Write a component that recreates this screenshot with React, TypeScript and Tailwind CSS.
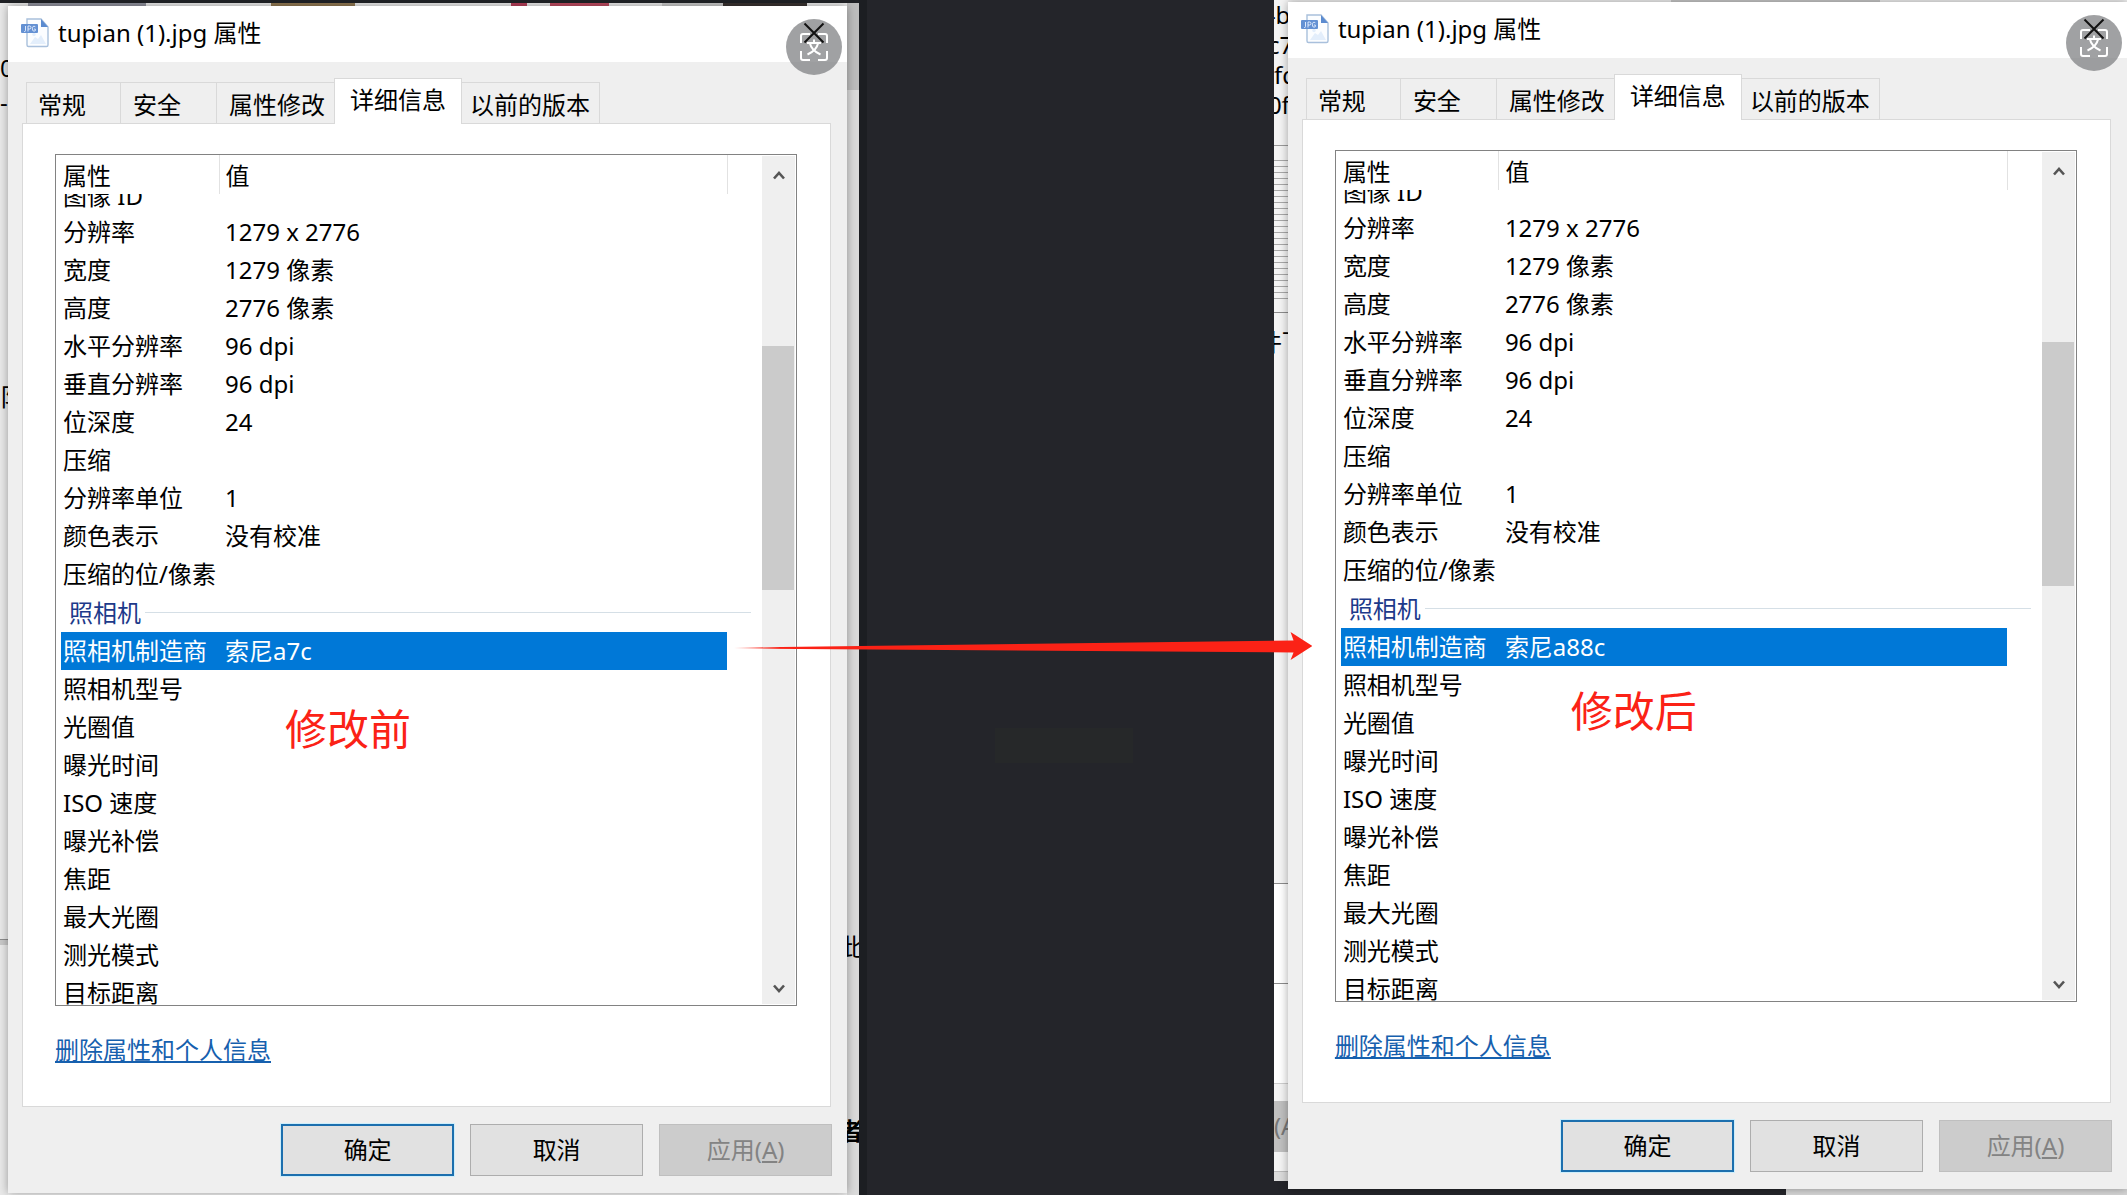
import React from "react";

type Row = { name: string; value?: string };

const imageRows: Row[] = [
  { name: "分辨率", value: "1279 x 2776" },
  { name: "宽度", value: "1279 像素" },
  { name: "高度", value: "2776 像素" },
  { name: "水平分辨率", value: "96 dpi" },
  { name: "垂直分辨率", value: "96 dpi" },
  { name: "位深度", value: "24" },
  { name: "压缩" },
  { name: "分辨率单位", value: "1" },
  { name: "颜色表示", value: "没有校准" },
  { name: "压缩的位/像素" },
];

const cameraRows: Row[] = [
  { name: "照相机型号" },
  { name: "光圈值" },
  { name: "曝光时间" },
  { name: "ISO 速度" },
  { name: "曝光补偿" },
  { name: "焦距" },
  { name: "最大光圈" },
  { name: "测光模式" },
];

function JpgIcon() {
  return (
    <svg width="28" height="30" viewBox="0 0 28 30" aria-hidden="true">
      <path d="M6 1h14l7 8v18a1.5 1.5 0 0 1-1.500 1.500H7.500A1.500 1.500 0 0 1 6 27z" fill="#fbfdff" stroke="#a9c0dc" strokeWidth="1.400" />
      <path d="M20 1l7 8h-7z" fill="#5b8bd0" />
      <path d="M9 26l5-7 3 2 3-4 5 9z" fill="#e3eefb" />
      <circle cx="13" cy="16.500" r="1.700" fill="#e3eefb" />
      <rect x="0" y="6" width="17" height="9" rx="1" fill="#6491d3" />
      <path d="M4.500 8v4.500q0 1-1 1H3M7 13.500V8h1.500q1.500 0 1.500 1.500T8.500 11H7M14.300 8.700q-2.800-1.500-2.800 2t2.800 2V11h-1.200" fill="none" stroke="#eaf2ff" strokeWidth="0.900" />
    </svg>
  );
}

function TranslateBadge() {
  return (
    <button aria-label="关闭" className="absolute top-[13px] right-[5px] size-14 rounded-full bg-[#808284]/75">
      <svg width="56" height="56" viewBox="0 0 56 56" fill="none" aria-hidden="true">
        <g stroke="#fff" strokeWidth="2">
          <path d="M15 24v-7q0-2 2-2h7M32 15h7q2 0 2 2v7M41 32v7q0 2-2 2h-7M24 41h-7q-2 0-2-2v-7" />
          <path d="M28 20.500v3M21 24h14M32 24.500q-1.500 7-10.500 11M24 24.500q1.500 7 10.500 11" />
        </g>
        <path d="M18.500 4.500l19 19M37.500 4.500l-19 19" stroke="#111" strokeWidth="2" />
      </svg>
    </button>
  );
}

function Chevron({ down = false }: { down?: boolean }) {
  return (
    <svg width="12" height="10" viewBox="0 0 12 10" fill="none" stroke="#555" strokeWidth="2.600" aria-hidden="true">
      <path d={down ? "M1 1.500l5 5.500 5-5.500" : "M1 8.500L6 3l5 5.500"} />
    </svg>
  );
}

function ScrollBar() {
  return (
    <div className="my-px mr-px flex w-[33px] shrink-0 flex-col items-center bg-[#efefef]">
      <button aria-label="向上滚动" className="flex h-[38px] w-full items-center justify-center">
        <Chevron />
      </button>
      <div className="mt-[152px] mr-px h-[244px] w-8 bg-[#cbcbcb]" />
      <button aria-label="向下滚动" className="mt-auto flex h-[31px] w-full items-center justify-center">
        <Chevron down />
      </button>
    </div>
  );
}

function PropertyRow({ name, value }: Row) {
  return (
    <tr>
      <td className="pl-0.5">{name}</td>
      <td className="pl-1.5">{value}</td>
      <td />
    </tr>
  );
}

function PropertyTable({ maker }: { maker: string }) {
  return (
    <table className="w-full table-fixed border-collapse text-left leading-[38px] whitespace-nowrap">
      <colgroup>
        <col className="w-[158px]" />
        <col />
        <col className="w-[35px]" />
      </colgroup>
      <thead className="leading-[36px]">
        <tr>
          <th className="h-[39px] border-r border-[#e2e2e2] p-0 pt-[3px] pl-0.5 font-normal">属性</th>
          <th className="border-r border-[#e2e2e2] p-0 pt-[3px] pl-1.5 font-normal">值</th>
          <td />
        </tr>
      </thead>
      <tbody>
        <tr>
          <td className="p-0 pl-0.5">
            <div className="flex h-[19px] flex-col justify-end overflow-hidden leading-[34px]">图像 ID</div>
          </td>
        </tr>
        {imageRows.map((r) => (
          <PropertyRow key={r.name} {...r} />
        ))}
        <tr>
          <th colSpan={3} className="h-[39px] p-0 pr-[11px] pl-2 font-normal text-[#1d3a8a]">
            <div className="flex items-center gap-1">
              <span>照相机</span>
              <span className="h-px flex-1 bg-[#d5dfe6]" />
            </div>
          </th>
        </tr>
        <tr className="text-white">
          <td className="bg-[#0078d7] pl-0.5">照相机制造商</td>
          <td className="bg-[#0078d7] pl-1.5">{maker}</td>
          <td />
        </tr>
        {cameraRows.map((r) => (
          <PropertyRow key={r.name} {...r} />
        ))}
        <tr>
          <td className="p-0 pl-0.5">
            <div className="h-[31px] overflow-hidden">目标距离</div>
          </td>
        </tr>
      </tbody>
    </table>
  );
}

const tabBase = "h-[41px] border-t border-r border-[#d9d9d9] bg-[#efefef] text-left leading-[43px]";

function PropertiesDialog({ maker, note, noteClass }: { maker: string; note: string; noteClass: string }) {
  return (
    <section className="relative bg-[#efefef] pb-[17px] shadow-[0_0_9px_rgba(0,0,0,0.35)]">
      <header className="flex h-14 items-center bg-white pb-0.5 pl-[13px]">
        <JpgIcon />
        <h1 className="ml-[9px]">tupian (1).jpg 属性</h1>
      </header>
      <TranslateBadge />

      <div className="mt-4 mr-4 ml-3.5">
        <div role="tablist" className="flex items-end pl-1">
          <button role="tab" className={`${tabBase} w-[95px] border-l pl-[11px]`}>常规</button>
          <button role="tab" className={`${tabBase} w-24 pl-3`}>安全</button>
          <button role="tab" className={`${tabBase} w-[117px] border-r-0 pl-3`}>属性修改</button>
          <button
            role="tab"
            aria-selected="true"
            className="relative z-10 -mb-px h-[46px] w-32 border-x border-t border-[#d9d9d9] bg-white pb-1 pl-[15px] text-left leading-[40px]"
          >
            详细信息
          </button>
          <button role="tab" className={`${tabBase} w-[138px] pl-2`}>以前的版本</button>
        </div>

        <div className="border border-[#d9d9d9] bg-white pt-[30px] pr-[33px] pb-[37px] pl-8">
          <div className="flex border border-[#828282] bg-white">
            <div className="min-w-0 flex-1 pl-[5px]">
              <PropertyTable maker={maker} />
            </div>
            <ScrollBar />
          </div>
          <a href="#remove" className="mt-[25px] inline-block leading-[38px] text-[#1660ae] underline decoration-2 underline-offset-2">
            删除属性和个人信息
          </a>
        </div>
      </div>

      <footer className="mt-[17px] mr-[15px] flex justify-end gap-4">
        <button className="h-[52px] w-[173px] border-2 border-[#1c6fae] bg-[#e1e1e1] ring-1 ring-[#cdeefb]">确定</button>
        <button className="h-[52px] w-[173px] border border-[#adadad] bg-[#e1e1e1]">取消</button>
        <button disabled className="h-[52px] w-[173px] border border-[#bfbfbf] bg-[#cccccc] text-[#838383]">
          应用(<u className="underline-offset-2">A</u>)
        </button>
      </footer>

      <p className={`absolute text-[42px] leading-[60px] text-[#fb2216] ${noteClass}`}>{note}</p>
    </section>
  );
}

export default function App() {
  return (
    <main className="relative flex min-h-screen overflow-hidden bg-[#24252a] font-['Noto_Sans','Noto_Sans_CJK_SC',sans-serif] text-[24px] text-black">
      <div className="flex min-w-0 flex-[859] flex-col border-t-[3px] border-[#202226]">
        <div className="flex flex-1 bg-[#efefef]">
          <div className="w-2 shrink-0 overflow-hidden bg-[#e9e9e9] pt-[46px]" aria-hidden="true">
            <p className="leading-[38px]">0</p>
            <p className="leading-[30px]">-</p>
            <p className="pt-[263px] leading-[34px]">阝</p>
            <div className="mt-[525px] h-1.5 border-t border-[#8d8d8d] bg-[#c8c8c8]" />
          </div>
          <div className="min-w-0 flex-1">
            <div className="flex h-[3px] bg-[#e9e9e9]" aria-hidden="true">
              <span className="ml-[2.400%] w-[14%] bg-[#8f919c]" />
              <span className="ml-[15%] w-[10%] bg-[#917852]" />
              <span className="ml-[18.500%] w-[2%] bg-[#b53e58]" />
              <span className="ml-[2.700%] w-[7%] bg-[#bd4a60]" />
              <span className="ml-[6.400%] w-[7.200%] bg-[#c8c8c8]" />
              <span className="w-[10%] bg-[#393230]" />
            </div>
            <PropertiesDialog maker="索尼a7c" note="修改前" noteClass="top-[693px] left-[33%]" />
          </div>
          <div className="flex w-3 shrink-0 flex-col overflow-hidden bg-[#dadada]" aria-hidden="true">
            <div className="h-[87px] bg-[#bdbdbd]" />
            <p className="-ml-2 pt-[838px] leading-[38px]">此</p>
            <p className="-ml-2 pt-[146px] leading-[38px] font-bold">者</p>
          </div>
        </div>
      </div>

      <div className="flex w-[19.500%] items-start border-l-8 border-[#1c1e22] pt-[728px] pl-[6%]" aria-hidden="true">
        <div className="h-[35px] w-[138px] bg-[#262829]" />
      </div>

      <div className="flex min-w-0 flex-[853] flex-col">
        <div className="flex bg-[#efefef]">
          <div className="flex w-3.5 shrink-0 flex-col overflow-hidden bg-[#f4f4f4]" aria-hidden="true">
            <p className="-ml-1.5 h-[145px] leading-[30px] whitespace-pre">{"-b\nc7\n fd\n0fl"}</p>
            <div className="h-[15px] border-t border-[#9a9a9a]" />
            <div className="flex h-[153px] flex-col gap-[5px] border-b border-[#8c8c8c]">
              {Array.from({ length: 24 }, (_, i) => (
                <span key={i} className="h-px shrink-0 bg-[#a8a8a8]" />
              ))}
            </div>
            <p className="-ml-4 h-[570px] pt-2.5 leading-[38px] whitespace-nowrap">件下</p>
            <div className="h-[100px] border-t border-[#8c8c8c] bg-white" />
            <div className="h-[100px] border-t border-[#8c8c8c] bg-white" />
            <div className="h-[18px] border-t border-[#cfcfcf]" />
            <p className="h-[51px] bg-[#c0c0c0] leading-[50px] text-[#777]">(A)</p>
            <div className="h-5 border-b border-[#bbb]" />
            <div className="h-[9px] bg-[#dcdcdc]" />
            <div className="flex-1 bg-[#24252a]" />
          </div>
          <div className="min-w-0 flex-1">
            <div className="flex h-0.5" aria-hidden="true">
              <span className="ml-[45.600%] w-[25%] bg-[#c8c8c8]" />
            </div>
            <PropertiesDialog maker="索尼a88c" note="修改后" noteClass="top-[679px] left-[33.700%]" />
          </div>
        </div>
        <div className="flex h-1.5" aria-hidden="true">
          <span className="ml-auto w-[40%] bg-[#d6d6d6]" />
        </div>
      </div>

      <svg
        className="absolute top-[632px] left-[34.500%] z-20 h-[28px] w-[27.200%]"
        viewBox="0 0 579 28"
        preserveAspectRatio="none"
        aria-hidden="true"
      >
        <defs>
          <linearGradient id="shaft" x1="0" x2="1" y1="0" y2="0">
            <stop offset="0" stopColor="#fb2216" stopOpacity="0" />
            <stop offset="0.080" stopColor="#fb2216" />
          </linearGradient>
        </defs>
        <path d="M0 15.500L560 8.500 557 0 579 14 557 28 560 20.500 0 16.500z" fill="url(#shaft)" />
      </svg>
    </main>
  );
}
